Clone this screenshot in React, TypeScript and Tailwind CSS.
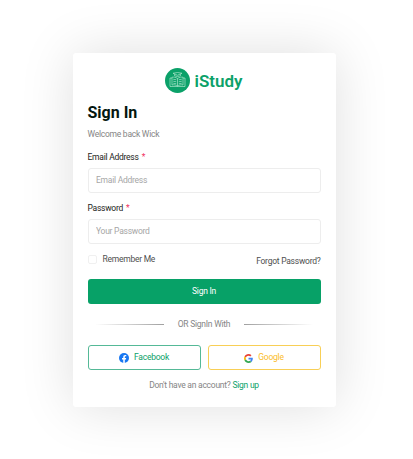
import React from "react";

function BookLogo() {
  return (
    <svg viewBox="0 0 50 50" className="h-[25px] w-[25px] shrink-0" fill="none" stroke="#c4eeda" strokeWidth="1.2" strokeLinejoin="round">
      <circle cx="25" cy="25" r="25" fill="#0ba169" stroke="none" />
      <path d="M16 10.500L25 9L34 10.500L25 14.500ZM19 12.500V15.500Q25 19 31 15.500V12.500" />
      <path d="M25 21C21 18 17 18 14 18.500V34C18 33 22 34 25 36C28 34 32 33 36 34V18.500C33 18 29 18 25 21ZM25 21V36" />
      <path d="M14 20H10V37H40V20H36" />
      <path d="M16.500 22.500L22.500 23.500M16.500 26.500L22.500 27.500M16.500 30.500L22.500 31.500M33.500 22.500L27.500 23.500M33.500 26.500L27.500 27.500M33.500 30.500L27.500 31.500" />
    </svg>
  );
}

function FacebookIcon() {
  return (
    <svg viewBox="0 0 24 24" className="mt-px h-[10px] w-[10px]">
      <circle cx="12" cy="12" r="12" fill="#1877f2" />
      <path fill="#fff" d="M16.700 15.500l.5-3.500h-3.300V9.800c0-1 .5-1.900 2-1.900h1.500v-3s-1.400-.2-2.700-.2c-2.700 0-4.500 1.700-4.500 4.700V12h-3v3.500h3V24h3.700v-8.500z" />
    </svg>
  );
}

function GoogleIcon() {
  return (
    <svg viewBox="0 0 48 48" className="mt-px h-[9px] w-[9px]">
      <path fill="#ea4335" d="M24 9.500c3.540 0 6.710 1.220 9.210 3.600l6.850-6.850C35.900 2.380 30.470 0 24 0 14.620 0 6.510 5.380 2.560 13.220l7.980 6.190C12.430 13.720 17.740 9.500 24 9.500z" />
      <path fill="#4285f4" d="M46.980 24.550c0-1.570-.15-3.090-.38-4.550H24v9.020h12.940c-.58 2.960-2.260 5.480-4.780 7.180l7.730 6c4.510-4.180 7.090-10.360 7.090-17.650z" />
      <path fill="#fbbc05" d="M10.530 28.590c-.48-1.450-.76-2.990-.76-4.590s.27-3.140.76-4.590l-7.980-6.190C.92 16.460 0 20.120 0 24s.92 7.540 2.560 10.780z" />
      <path fill="#34a853" d="M24 48c6.480 0 11.930-2.130 15.890-5.810l-7.730-6c-2.150 1.450-4.920 2.300-8.160 2.300-6.260 0-11.570-4.220-13.470-9.910l-7.980 6.190C6.510 42.620 14.620 48 24 48z" />
    </svg>
  );
}

function Field({ label, placeholder, type }: { label: string; placeholder: string; type: string }) {
  return (
    <label className="block">
      <span className="flex h-[10px] items-center gap-[3px] text-[#1c2421]">
        {label}
        <span className="text-[#f0335f]">*</span>
      </span>
      <input
        type={type}
        placeholder={placeholder}
        className="mt-1.5 block h-[25px] w-full rounded-[3px] border border-[#ededed] bg-white px-[7.500px] pb-[2px] tracking-[-0.25px] placeholder:text-[#a6a6a6]"
      />
    </label>
  );
}

export default function App() {
  return (
    <main className="flex h-[459px] w-[413px] justify-center overflow-hidden bg-white pt-[53px] pr-[5px] font-['Roboto',sans-serif] text-[8.500px] leading-[10px] tracking-[-0.25px]">
      <section className="h-[354px] w-[263px] rounded-[3px] bg-white px-[15px] pt-[15px] shadow-[0_0_54px_rgba(0,0,0,0.13)]">
        <div className="flex h-[25px] items-center justify-center gap-1 tracking-normal">
          <BookLogo />
          <span className="text-[17px] leading-5 font-semibold text-[#0ba169]">iStudy</span>
        </div>
        <h1 className="mt-[10px] text-[16px] leading-5 font-bold tracking-normal text-[#04160f]">Sign In</h1>
        <p className="mt-[6px] mb-[13px] text-[#858585]">Welcome back Wick</p>
        <Field label="Email Address" placeholder="Email Address" type="text" />
        <div className="h-[10px]" />
        <Field label="Password" placeholder="Your Password" type="password" />
        <div className="mt-[10px] flex h-[14px] items-start justify-between text-[#4f4f4f]">
          <label className="flex items-center gap-[6px]">
            <input type="checkbox" className="h-[9px] w-[9px] appearance-none rounded-[2px] border border-[#f0f0f0]" />
            Remember Me
          </label>
          <a className="pt-[2px]">Forgot Password?</a>
        </div>
        <button className="mt-[11px] block h-[25px] w-full rounded-[3px] bg-[#07a167] pb-px tracking-[-0.25px] text-white">Sign In</button>
        <div className="mt-[15px] flex h-[10px] items-center justify-center gap-[13.500px] text-[#858585]">
          <span className="h-px w-[69px] bg-linear-to-r from-transparent to-[#a0a0a0]" />
          OR SignIn With
          <span className="h-px w-[69px] bg-linear-to-l from-transparent to-[#a0a0a0]" />
        </div>
        <div className="mt-4 grid h-[25px] grid-cols-2 gap-[7px]">
          <button className="flex items-center justify-center gap-[5px] rounded-[3px] border border-[#55b997] tracking-[-0.25px] text-[#0ba169]">
            <FacebookIcon />
            <span className="pb-px">Facebook</span>
          </button>
          <button className="flex items-center justify-center gap-[5px] rounded-[3px] border border-[#f8cf56] tracking-[-0.25px] text-[#fbbd2a]">
            <GoogleIcon />
            <span className="pb-px">Google</span>
          </button>
        </div>
        <p className="mt-[10px] text-center text-[#858585]">
          Don't have an account? <a className="text-[#0ba169]">Sign up</a>
        </p>
      </section>
    </main>
  );
}
